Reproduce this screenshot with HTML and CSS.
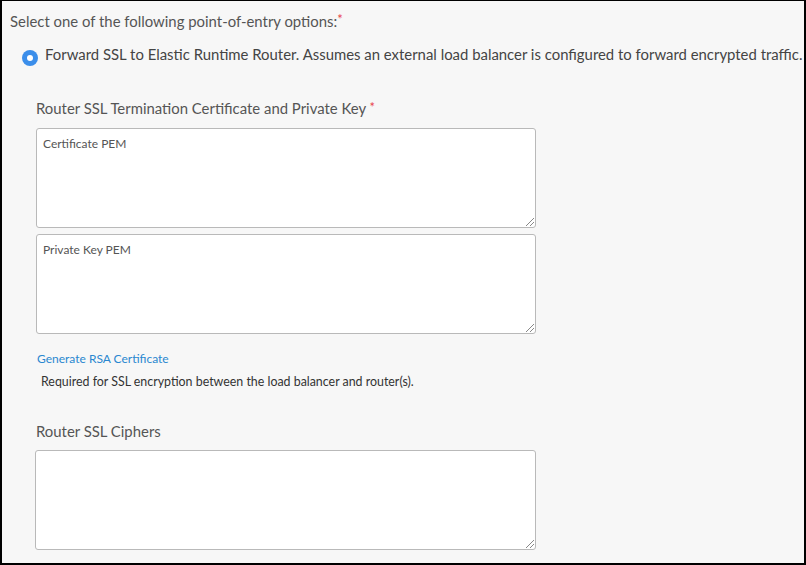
FILE: index.html
```html
<!DOCTYPE html>
<html>
<head>
<meta charset="utf-8">
<link rel="stylesheet" href="styles.css">
</head>
<body>
<div class="frame">
  <div class="question">Select one of the following point-of-entry options:<span class="req">*</span></div>
  <label class="option">
    <span class="radio"><span class="dot"></span></span>
    <span class="option-text">Forward SSL to Elastic Runtime Router. Assumes an external load balancer is configured to forward encrypted traffic.</span>
  </label>
  <div class="sub">
    <div class="field-label">Router SSL Termination Certificate and Private Key <span class="req">*</span></div>
    <div class="box"><span class="ph">Certificate PEM</span><span class="grip"></span></div>
    <div class="box second"><span class="ph">Private Key PEM</span><span class="grip"></span></div>
    <a class="link">Generate RSA Certificate</a>
    <div class="help">Required for SSL encryption between the load balancer and router(s).</div>
    <div class="field-label ciphers">Router SSL Ciphers</div>
    <div class="box third"><span class="grip"></span></div>
  </div>
</div>
</body>
</html>
```
FILE: styles.css
```css
html, body { margin: 0; padding: 0; }
body { font-family: "Lato", "Liberation Sans", sans-serif; }
.frame {
  width: 806px; height: 565px; box-sizing: border-box;
  background: #f7f7f7;
  border-top: 1px solid #000; border-left: 2px solid #000; border-right: 2px solid #000; border-bottom: 2px solid #000;
  padding: 10px 0 0 8px;
  overflow: hidden;
}
.question { font-size: 14.9px; line-height: 20px; color: #555; }
.req { color: #e8454b; font-size: 13px; vertical-align: top; position: relative; top: -2px; }
.option { display: flex; align-items: flex-start; margin: 13px 0 0 12px; }
.radio { flex-shrink: 0; width: 16px; height: 16px; border-radius: 50%; background: #3b8eea; display: flex; align-items: center; justify-content: center; margin-top: 6px; }
.dot { width: 6px; height: 6px; border-radius: 50%; background: #fff; }
.option-text { margin-left: 7px; font-size: 14.9px; line-height: 20px; color: #444; white-space: nowrap; }
.sub { margin-left: 26px; margin-top: 32px; }
.field-label { font-size: 14.9px; line-height: 20px; color: #555; }
.field-label .req { top: -1px; }
.box {
  position: relative; width: 500px; height: 100px; box-sizing: border-box;
  margin-top: 10px; background: #fff; border: 1px solid #b9b9b9; border-radius: 3px;
  padding: 3px 6px;
}
.box.second { margin-top: 6px; }
.ph { font-size: 12px; line-height: 14px; color: #555; }
.grip {
  position: absolute; right: 1px; bottom: 1px; width: 8px; height: 8px;
  background: linear-gradient(135deg, transparent 45%, #888 45%, #888 52%, transparent 52%, transparent 70%, #888 70%, #888 77%, transparent 77%);
}
.link { display: block; margin-top: 18px; margin-left: 1px; font-size: 12px; line-height: 14px; color: #2a87d0; }
.help { margin-top: 9px; margin-left: 5px; font-size: 12.4px; line-height: 14px; color: #333; }
.ciphers { margin-top: 32px; }
.box.third { margin-top: 9px; margin-left: -1px; width: 501px; }
```
